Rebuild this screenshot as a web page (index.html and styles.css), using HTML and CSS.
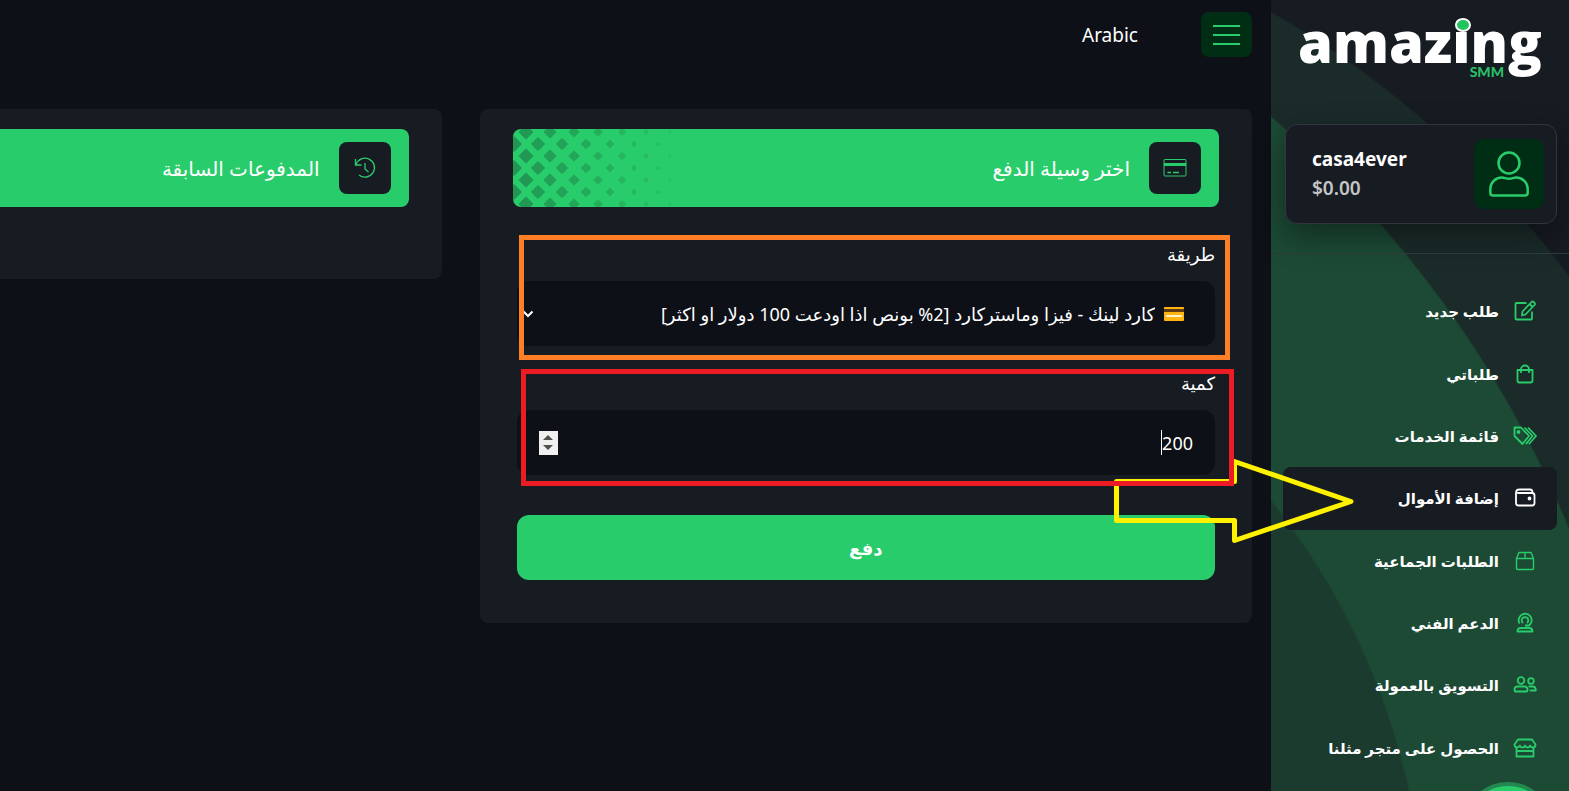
FILE: index.html
```html
<!DOCTYPE html>
<html lang="ar" dir="rtl">
<head>
	<meta charset="UTF-8">
	<title>إضافة الأموال</title>
	<link rel="stylesheet" href="styles.css">
</head>
<body>
	<div class="page">
		<!-- sidebar -->
		<aside class="sidebar">
			<a href="#" class="logo" dir="ltr">
				<span class="logo-name">amazing</span>
				<span class="logo-dot"></span>
				<span class="logo-sub">SMM</span>
			</a>
			<div class="profile">
				<div class="avatar">
					<svg viewBox="0 0 40 46" width="40" height="46" fill="none" stroke="currentColor" stroke-width="2.5">
						<circle cx="20" cy="12" r="10.5"/>
						<path d="M4 44.500h32q2.700 0 2.700-2.700V38a11.500 11.500 0 0 0-11.500-11.500c-3 0-4 1.300-7.200 1.300s-4.200-1.300-7.200-1.300A11.500 11.500 0 0 0 1.300 38v3.800q0 2.700 2.700 2.700z"/>
					</svg>
				</div>
				<div class="profile-info" dir="ltr">
					<b class="profile-name">casa4ever</b>
					<span class="profile-money">$0.00</span>
				</div>
			</div>
			<nav class="menu">
				<a href="#">
					<svg viewBox="0 0 24 24" width="24" height="24"><path d="M13.500 4H3.500a1 1 0 0 0-1 1v14.500a1 1 0 0 0 1 1H18a1 1 0 0 0 1-1v-7M9 16.500l.5-4L18.500 3q1-1 2.200 0l.8.800q1 1.200 0 2.200l-9 9.500zM16.500 5l3 3"/></svg>
					<span>طلب جديد</span>
				</a>
				<a href="#">
					<svg viewBox="0 0 24 24" width="24" height="24"><path d="M4.500 8h15v10.500q0 2-2 2h-11q-2 0-2-2zM8 11V7.500a4 4 0 0 1 8 0V11"/></svg>
					<span>طلباتي</span>
				</a>
				<a href="#">
					<svg viewBox="0 0 24 24" width="24" height="24"><path d="M1.500 3.500h6.500l8 8.500-6.500 8-8-8zM11.500 3.500l8 8.500-6.500 8M15 3.500l8 8.500-7 8"/><circle cx="5.500" cy="8" r="1" fill="currentColor"/></svg>
					<span>قائمة الخدمات</span>
				</a>
				<a href="#" class="active">
					<svg viewBox="0 0 24 24" width="24" height="24"><path d="M19.500 7q0-3.500-2.500-3.500H6.500q-3.500 0-3.500 3.500v10q0 2.500 2.500 2.500H19q2.500 0 2.500-2.500V9.500q0-2.500-2.500-2.500H6q-3 0-3-1"/><circle cx="16.500" cy="12.500" r="1" fill="currentColor"/></svg>
					<span>إضافة الأموال</span>
				</a>
				<a href="#">
					<svg viewBox="0 0 24 24" width="24" height="24"><path class="thin" d="M3.500 9.500v10q0 1 1 1h15q1 0 1-1v-10l-2.500-6H6zM3.500 9.500h17M12 3.500v6"/></svg>
					<span>الطلبات الجماعية</span>
				</a>
				<a href="#">
					<svg viewBox="0 0 24 24" width="24" height="24"><path d="M6.500 12.500A6.500 6.500 0 1 1 16 14.500h-4M10 12A3.300 3.300 0 1 1 14 12M4.500 20.500h15q0-3.500-3.500-3.500H8q-3.500 0-3.500 3.500z"/></svg>
					<span>الدعم الفني</span>
				</a>
				<a href="#">
					<svg viewBox="0 0 24 24" width="24" height="24"><circle cx="8" cy="7.500" r="3.300"/><circle cx="18" cy="8" r="2.800"/><path d="M2.500 18.500h11q1 0 1-1v-1q0-3-3-3h-7q-3 0-3 3v1q0 1 1 1zM15.500 13.500h4q3.200 0 3.200 3v1h-6"/></svg>
					<span>التسويق بالعمولة</span>
				</a>
				<a href="#">
					<svg viewBox="0 0 24 24" width="24" height="24"><path d="M5 3.500h14l3.500 5q0 3-2.700 3-2 0-2.600-2-.6 2-2.600 2T12 9.500q-.6 2-2.600 2T6.800 9.500q-.6 2-2.600 2-2.700 0-2.700-3zM3.500 12v8.500h17V12M3.500 15h17"/></svg>
					<span>الحصول على متجر مثلنا</span>
				</a>
			</nav>
			<button type="button" class="chat-btn" aria-label="chat"></button>
		</aside>

		<!-- main -->
		<main class="main">
			<header class="topbar">
				<button type="button" class="toggle" aria-label="menu">
					<span></span>
					<span></span>
					<span></span>
				</button>
				<a href="#" class="lang">Arabic</a>
			</header>
			<div class="cards">
				<section class="card">
					<div class="banner">
						<div class="banner-icon">
							<svg viewBox="0 0 24 20" width="24" height="20" fill="none" stroke="currentColor"><rect x="1" y="1.500" width="22" height="16.500" rx="1"/><path d="M1 6.500h22" stroke-width="3"/><path d="M4.500 14.500h3.500M10 14.500h6" stroke-width="1.500"/></svg>
						</div>
						<h2>اختر وسيلة الدفع</h2>
						<svg class="dots" width="196" height="78"></svg>
					</div>
					<form class="pay-form">
						<label for="method">طريقة</label>
						<div class="select-box">
							<svg class="card-emoji" viewBox="0 0 20 14" width="20" height="14"><rect width="20" height="14" rx="1" fill="#ffb40f"/><path d="M0 2h20v3H0z" fill="#5c3a13"/><path d="M2 8h16v2H2z" fill="#fff3cf"/></svg>
							<select id="method">
								<option>كارد لينك - فيزا وماستركارد [2% بونص اذا اودعت 100 دولار او اكثر]</option>
							</select>
							<svg class="arrow" viewBox="0 0 12 8" width="12" height="8" fill="none" stroke="currentColor" stroke-width="2"><path d="M1.500 1.500 6 6l4.500-4.500"/></svg>
						</div>
						<label for="amount">كمية</label>
						<div class="amount-box">
							<input type="text" inputmode="numeric" id="amount" value="200">
							<span class="caret"></span>
							<span class="spinner"></span>
						</div>
						<button type="submit" class="pay-btn">دفع</button>
					</form>
				</section>
				<section class="card history">
					<div class="banner">
						<div class="banner-icon">
							<svg viewBox="0 0 24 24" width="24" height="24" fill="none" stroke="currentColor" stroke-width="1.300"><path d="M2.500 3v6h6M3 8.500A9.500 9.500 0 1 1 6 19M12 7v6l3.500 3"/></svg>
						</div>
						<h2>المدفوعات السابقة</h2>
					</div>
				</section>
			</div>
		</main>

		<!-- marks drawn over the page -->
		<svg class="marks" width="1069" height="580" fill="none" stroke-width="5">
			<path stroke="#fff200" stroke-linejoin="round" d="M616.500 481.500h118V461.500L851 501.500 734.500 540.500v-20h-118z"/>
			<path stroke="#ff7f27" d="M21.500 237.500h706v120h-706z"/>
			<path stroke="#ed1c24" d="M23.500 371.500h708v112h-708z"/>
		</svg>
	</div>
	<script>
		// diamonds of the banner, smaller and paler to the right
		var dots = document.querySelector(".dots");
		var html = "";
		for(var i=0;i<16;i++){
			var x = i*12+1;
			var r = 7.5-i*0.45;
			for(var y=(i%2?3:15)-24;y<90;y+=24){
				html += '<path d="M'+x+' '+(y-r)+'l'+r+' '+r+'l-'+r+' '+r+'l-'+r+' -'+r+'z" opacity="'+(1-i/16)+'"/>';
			}
		}
		dots.innerHTML = html;
	</script>
</body>
</html>
```
FILE: styles.css
```css
*{
	margin:0;
	padding:0;
	box-sizing:border-box;
}
body{
	background:#0d1017;
	color:#fff;
	font-family:"Noto Sans","DejaVu Sans",sans-serif;
	font-size:16px;
}
a{
	color:#fff;
	text-decoration:none;
}
button,input,select{
	font:inherit;
	color:inherit;
	border:none;
}
.page{
	display:flex;
	position:relative;
	min-height:100vh;
	overflow:hidden;
}
/*------------sidebar------------*/
.sidebar{
	position:relative;
	flex:0 0 298px;
	background:
		radial-gradient(circle at -560px 945px,#1b3b2e 714px,transparent 716px),
		radial-gradient(circle at -699px 936px,#1c4a35 1076px,transparent 1078px),
		radial-gradient(circle at -494px 870px,#1a2b29 989px,transparent 991px),
		#171b22;
}
.logo{
	display:flex;
	position:relative;
	justify-content:center;
	height:124px;
}
.logo-name{
	font-family:"Open Sans",sans-serif;
	font-size:56px;
	font-weight:800;
	line-height:82px;
}
.logo-dot{
	position:absolute;
	left:184px;
	top:18px;
	width:16px;
	height:14px;
	border:2px solid #fff;
	border-radius:50%;
	background:#1fc55f;
}
.logo-sub{
	position:absolute;
	right:65px;
	top:63px;
	font-family:Lato,sans-serif;
	font-size:14px;
	font-weight:900;
	line-height:18px;
	color:#29c068;
}
.profile{
	display:flex;
	align-items:center;
	height:100px;
	margin:0 12px 0 14px;
	padding:0 12px;
	border:1px solid #33363f;
	border-radius:12px;
	background:#171b22;
	box-shadow:0 12px 32px rgba(0,0,0,.4);
}
.avatar{
	display:flex;
	align-items:center;
	justify-content:center;
	width:70px;
	height:70px;
	border-radius:10px;
	background:#002e14;
	color:#29cc6a;
}
.profile-info{
	flex:1;
	display:flex;
	flex-direction:column;
	padding-left:14px;
	font-size:19px;
	line-height:29px;
}
.profile-money{
	color:#c5c5c8;
	font-weight:600;
}
.menu{
	display:grid;
	grid-auto-rows:1fr;
	height:530px;
	margin-top:29px;
	padding:26px 12px 4px;
	border-top:1px solid #2b3b3a;
}
.menu a{
	display:flex;
	align-items:center;
	gap:14px;
	padding:0 20px;
	border-radius:8px;
	font-size:15px;
	font-weight:bold;
}
.menu svg{
	fill:none;
	stroke:currentColor;
	stroke-width:1.8;
	stroke-linejoin:round;
	color:#29cc6a;
}
.menu .thin{
	stroke-width:1.4;
}
.menu .active{
	background:#171b22;
}
.menu .active svg{
	color:#fff;
}
.chat-btn{
	position:absolute;
	right:16px;
	bottom:-81px;
	width:90px;
	height:90px;
	border:4px solid #23874f;
	border-radius:50%;
	background:#29cc6a;
}
/*------------topbar------------*/
.main{
	flex:1;
	min-width:0;
	padding:12px 19px 40px 0;
}
.topbar{
	display:flex;
	align-items:center;
	gap:63px;
	height:45px;
}
.toggle{
	display:flex;
	flex-direction:column;
	align-items:center;
	justify-content:center;
	gap:7px;
	width:51px;
	height:45px;
	border-radius:8px;
	background:#002e14;
}
.toggle span{
	width:27px;
	height:2px;
	background:#29cc6a;
}
.lang{
	font-size:19px;
}
/*------------cards------------*/
.cards{
	display:grid;
	grid-template-columns:61.7% 60%;
	align-items:start;
	gap:38px;
	margin-top:52px;
}
.card{
	padding:20px 33px 43px;
	border-radius:8px;
	background:#171b22;
}
.history{
	padding-bottom:72px;
}
.banner{
	display:flex;
	position:relative;
	align-items:center;
	gap:19px;
	height:78px;
	padding:0 18px;
	border-radius:8px;
	background:#29cc6a;
	overflow:hidden;
}
.banner-icon{
	display:flex;
	align-items:center;
	justify-content:center;
	width:52px;
	height:52px;
	border-radius:8px;
	background:#171b22;
	color:#29cc6a;
}
.banner h2{
	font-size:20px;
	font-weight:500;
}
.dots{
	position:absolute;
	left:0;
	top:0;
	fill:#219653;
	stroke:#219653;
	stroke-linejoin:round;
}
/*------------form------------*/
.pay-form{
	padding:32px 4px 0;
}
.pay-form label{
	display:block;
	height:42px;
	font-size:18px;
	line-height:30px;
}
.select-box,.amount-box{
	position:relative;
	display:flex;
	align-items:center;
	height:65px;
	margin-bottom:22px;
	border-radius:12px;
	background:#0d1017;
	font-size:18px;
}
.select-box{
	gap:9px;
	padding:0 31px 0 5px;
}
.select-box select{
	flex:1;
	min-width:0;
	height:65px;
	background:transparent;
	appearance:none;
	outline:none;
}
.amount-box{
	padding:0 22px;
}
.amount-box input{
	flex:1;
	height:65px;
	background:transparent;
	outline:none;
}
.caret{
	position:absolute;
	right:53px;
	top:20px;
	width:1px;
	height:25px;
	background:#fff;
}
.spinner{
	display:flex;
	flex-direction:column;
	align-items:center;
	justify-content:center;
	gap:5px;
	width:19px;
	height:24px;
	background:#f0f0f0;
}
.spinner:before,.spinner:after{
	content:"";
	border:5px solid transparent;
	border-top:none;
	border-bottom-color:#505050;
}
.spinner:after{
	border-bottom:none;
	border-top:5px solid #505050;
}
.pay-btn{
	display:block;
	width:100%;
	height:65px;
	margin-top:40px;
	border-radius:12px;
	background:#29cc6a;
	font-size:18px;
	font-weight:bold;
}
/*------------marks------------*/
.marks{
	position:absolute;
	top:0;
	right:0;
	pointer-events:none;
}
```
